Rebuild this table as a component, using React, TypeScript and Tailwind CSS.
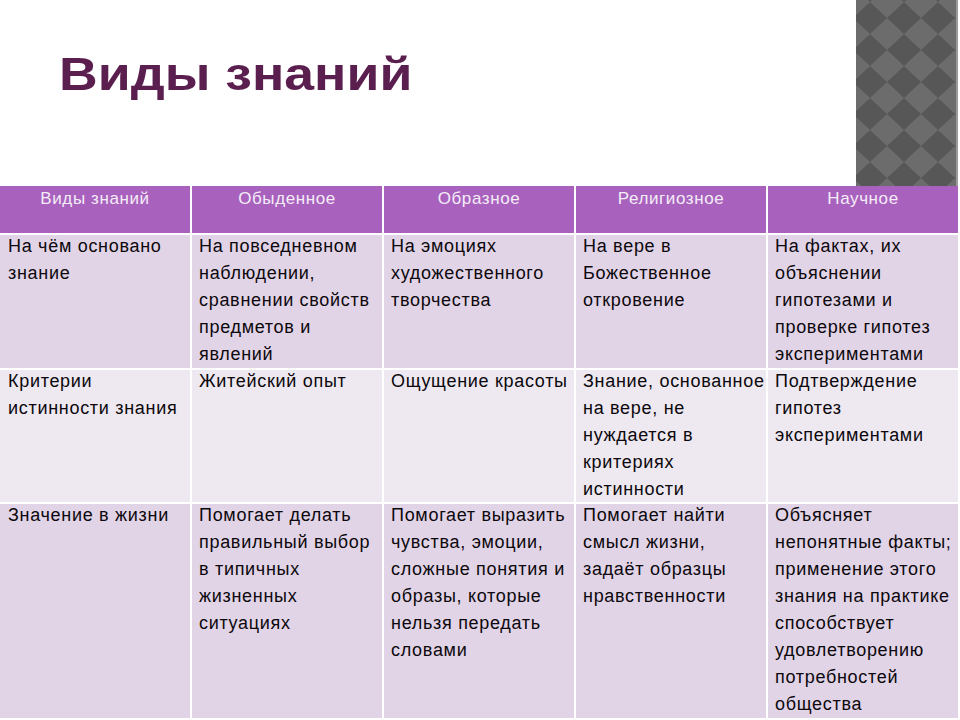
const headers = ["Виды знаний", "Обыденное", "Образное", "Религиозное", "Научное"];

const rows: { height: string; bg: string; cells: string[][] }[] = [
  {
    height: "h-[133px]",
    bg: "bg-[#e2d4e7]",
    cells: [
      ["На чём основано", "знание"],
      ["На повседневном", "наблюдении,", "сравнении свойств", "предметов и", "явлений"],
      ["На эмоциях", "художественного", "творчества"],
      ["На вере в", "Божественное", "откровение"],
      ["На фактах, их", "объяснении", "гипотезами и", "проверке гипотез", "экспериментами"],
    ],
  },
  {
    height: "h-[132px]",
    bg: "bg-[#eee8f1]",
    cells: [
      ["Критерии", "истинности знания"],
      ["Житейский опыт"],
      ["Ощущение красоты"],
      ["Знание, основанное", "на вере, не", "нуждается в", "критериях", "истинности"],
      ["Подтверждение", "гипотез", "экспериментами"],
    ],
  },
  {
    height: "h-[214px]",
    bg: "bg-[#e2d4e7]",
    cells: [
      ["Значение в жизни"],
      ["Помогает делать", "правильный выбор", "в типичных", "жизненных", "ситуациях"],
      ["Помогает выразить", "чувства, эмоции,", "сложные понятия и", "образы, которые", "нельзя передать", "словами"],
      ["Помогает найти", "смысл жизни,", "задаёт образцы", "нравственности"],
      ["Объясняет", "непонятные факты;", "применение этого", "знания на практике", "способствует", "удовлетворению", "потребностей", "общества"],
    ],
  },
];

function DiamondPanel() {
  return (
    <svg className="h-[186px] w-[102px]" viewBox="0 0 102 186">
      <defs>
        <pattern id="dia" x="-3" y="2" width="34" height="32" patternUnits="userSpaceOnUse">
          <rect width="34" height="32" fill="#6c6c6c" />
          <polygon points="17,0 34,16 17,32 0,16" fill="#575757" />
        </pattern>
      </defs>
      <rect width="102" height="186" fill="url(#dia)" />
      <rect x="100" width="2" height="186" fill="#9a9a9a" />
    </svg>
  );
}

export default function App() {
  return (
    <div className="h-[720px] w-[960px] overflow-hidden bg-white font-['Liberation_Sans',Arial,sans-serif]">
      {/* Title area */}
      <div className="flex h-[186px] items-start justify-between">
        <h1 className="ml-[59px] mt-[44px] origin-left scale-x-[1.14] text-[47px] font-bold leading-[60px] text-[#5a1e4f]">
          Виды знаний
        </h1>
        <div className="mr-[2px]">
          <DiamondPanel />
        </div>
      </div>

      {/* Table */}
      <div className="grid grid-cols-[repeat(5,190px)] gap-[2px] bg-white pb-[2px]">
        {headers.map((h) => (
          <div
            key={h}
            className="h-[47px] bg-[#a862be] pt-px text-center text-[17px] leading-[24px] tracking-[0.6px] text-[#f4ecf6]"
          >
            {h}
          </div>
        ))}
        {rows.map((row, ri) =>
          row.cells.map((lines, ci) => (
            <div
              key={`${ri}-${ci}`}
              className={`${row.height} ${row.bg} ${ci === 0 ? "pl-2" : "pl-[7px]"} text-[18px] leading-[27px] tracking-[0.7px] text-[#0c080c]`}
            >
              <div className="-mt-[2px]">
                {lines.map((l, li) => (
                  <div key={li} className="whitespace-nowrap">
                    {l}
                  </div>
                ))}
              </div>
            </div>
          ))
        )}
      </div>
    </div>
  );
}
